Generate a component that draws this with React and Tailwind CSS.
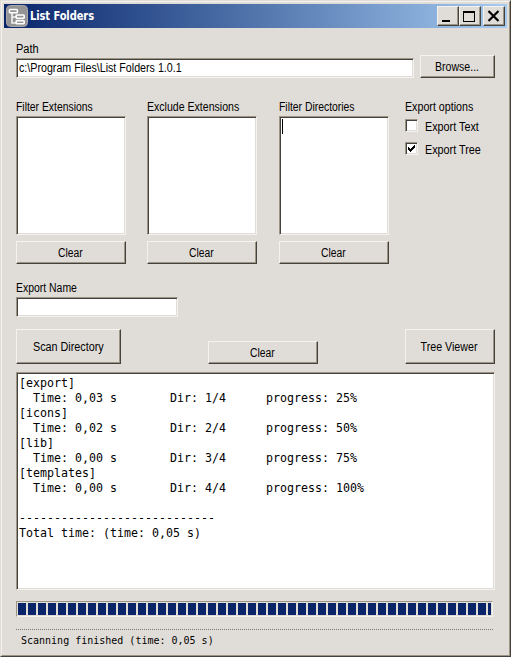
import React from 'react';

const raised =
  'border border-t-[#f4f2ee] border-l-[#f4f2ee] border-r-[#45423d] border-b-[#45423d] shadow-[inset_-1px_-1px_0_#9c9484] bg-[#e0ddd8]';
const sunken =
  'border border-t-[#9c9484] border-l-[#9c9484] border-r-[#f4f2ee] border-b-[#f4f2ee] shadow-[inset_1px_1px_0_#45423d,inset_-1px_-1px_0_#e0ddd8] bg-white';

function Button({ className, scale = 'scale-x-[.88]', children }) {
  return (
    <button className={`${raised} flex items-center justify-center whitespace-nowrap ${className}`}>
      {typeof children === 'string' ? <span className={`mr-px inline-block ${scale}`}>{children}</span> : children}
    </button>
  );
}

function Label({ className = '', scale = 'scale-x-[.87]', children }) {
  return (
    <div className={`h-[14px] leading-[14px] whitespace-nowrap ${className}`}>
      <span className={`inline-block origin-left ${scale}`}>{children}</span>
    </div>
  );
}

function FilterColumn({ title, scale, caret }) {
  return (
    <div className="w-[110px]">
      <Label scale={scale}>{title}</Label>
      <div className={`${sunken} mt-[2px] h-[119px] pt-[2px] pl-[2px]`}>
        {caret && <div className="h-[15px] w-px bg-black" />}
      </div>
      <Button className="mt-[6px] h-[23px] w-[110px]" scale="scale-x-[.86]">Clear</Button>
    </div>
  );
}

function Check({ label, checked }) {
  return (
    <div className="flex h-[13px] items-start">
      <div className={`${sunken} h-[13px] w-[13px] shrink-0`}>
        {checked && (
          <svg width="11" height="11" viewBox="0 0 11 11" shapeRendering="crispEdges">
            <path
              d="M2 4h1v3h-1zM3 5h1v3h-1zM4 6h1v3h-1zM5 5h1v3h-1zM6 4h1v3h-1zM7 3h1v3h-1zM8 2h1v3h-1z"
              fill="#000"
            />
          </svg>
        )}
      </div>
      <Label className="mt-[1px] ml-[7px] w-[60px]" scale="scale-x-[.9]">{label}</Label>
    </div>
  );
}

const entries = [
  { name: '[export]', time: '0,03 s', dir: '1/4', progress: '25%' },
  { name: '[icons]', time: '0,02 s', dir: '2/4', progress: '50%' },
  { name: '[lib]', time: '0,00 s', dir: '3/4', progress: '75%' },
  { name: '[templates]', time: '0,00 s', dir: '4/4', progress: '100%' },
];

function TreeIcon() {
  return (
    <svg className="ml-[2px] shrink-0" width="22" height="22" viewBox="0 0 22 22">
      <rect x="0.5" y="0.5" width="21" height="21" rx="4" fill="#949494" stroke="#a9a9a9" />
      <path d="M6 7.5v10.5H10M6 12H10" fill="none" stroke="#f2f2f2" strokeWidth="1.6" />
      <rect x="3.4" y="4.5" width="8" height="3.2" rx="0.8" fill="#949494" stroke="#fff" strokeWidth="1.6" />
      <rect x="10.2" y="10" width="8" height="3.2" rx="0.8" fill="#949494" stroke="#fff" strokeWidth="1.6" />
      <rect x="10.2" y="15.6" width="8" height="3.2" rx="0.8" fill="#949494" stroke="#fff" strokeWidth="1.6" />
    </svg>
  );
}

export default function App() {
  return (
    <div className="h-[657px] w-[511px] overflow-hidden border border-t-[#e0ddd8] border-l-[#e0ddd8] border-r-[#45423d] border-b-[#45423d] bg-[#e0ddd8] font-['Liberation_Sans',Arial,sans-serif] text-[12px] leading-[14px] text-black">
      <div className="h-[655px] w-[509px] border border-t-[#f4f2ee] border-l-[#f4f2ee] border-r-[#9c9484] border-b-[#9c9484] px-[2px] pt-[2px]">
        <div className="flex h-[24px] w-[503px] items-center bg-linear-to-r from-[#0a246a] to-[#a6caf0]">
          <TreeIcon />
          <div className="ml-[2px] origin-left scale-x-[.92] font-['DejaVu_Sans_Condensed','DejaVu_Sans',sans-serif] text-[12px] font-bold tracking-[-0.1px] whitespace-nowrap text-white">
            List Folders
          </div>
          <div className="mr-[2px] ml-auto flex">
            <Button className="h-[20px] w-[22px]">
              <svg width="20" height="18" shapeRendering="crispEdges">
                <path d="M4 13h8v2H4z" />
              </svg>
            </Button>
            <Button className="h-[20px] w-[22px]">
              <svg width="20" height="18" shapeRendering="crispEdges">
                <path d="M3 4h12v11H3zM4 6v8h10V6z" fillRule="evenodd" />
              </svg>
            </Button>
            <Button className="ml-[2px] h-[20px] w-[22px]">
              <svg width="20" height="18">
                <path d="M4.5 4l10 10M14.5 4l-10 10" stroke="#000" strokeWidth="2.2" />
              </svg>
            </Button>
          </div>
        </div>

        <div className="ml-[12px] w-[479px]">
          <Label className="mt-[14px]" scale="scale-x-[.92]">Path</Label>
          <div className="flex items-end justify-between">
            <div className={`${sunken} flex h-[20px] w-[398px] items-center pl-[2px] whitespace-nowrap`}>
              <span className="inline-block origin-left scale-x-[.89]">c:\Program Files\List Folders 1.0.1</span>
            </div>
            <Button className="-mt-[1px] h-[23px] w-[75px]">Browse...</Button>
          </div>

          <div className="mt-[22px] flex">
            <FilterColumn title="Filter Extensions" scale="scale-x-[.865]" />
            <div className="w-[21px]" />
            <FilterColumn title="Exclude Extensions" scale="scale-x-[.88]" />
            <div className="w-[22px]" />
            <FilterColumn title="Filter Directories" scale="scale-x-[.865]" caret />
            <div className="ml-[16px]">
              <Label className="w-[76px]" scale="scale-x-[.89]">Export options</Label>
              <div className="mt-[5px] flex flex-col gap-[10px]">
                <Check label="Export Text" />
                <Check label="Export Tree" checked />
              </div>
            </div>
          </div>

          <Label className="mt-[17px]">Export Name</Label>
          <div className={`${sunken} mt-[2px] h-[20px] w-[162px]`} />

          <div className="mt-[12px] flex items-end">
            <Button className="h-[35px] w-[105px]" scale="scale-x-[.9]">Scan Directory</Button>
            <Button className="ml-[87px] h-[23px] w-[110px]" scale="scale-x-[.86]">Clear</Button>
            <Button className="ml-auto h-[35px] w-[90px]" scale="scale-x-[.89]">Tree Viewer</Button>
          </div>

          <div
            className={`${sunken} mt-[8px] h-[218px] pt-[3px] pl-[2px] font-['DejaVu_Sans_Mono',monospace] text-[11.63px] leading-[15px] whitespace-pre`}
          >
            {entries.map((e) => (
              <div key={e.name}>
                <div>{e.name}</div>
                <div className="flex pl-[14px]">
                  <div className="w-[137px]">Time: {e.time}</div>
                  <div className="w-[96px]">Dir: {e.dir}</div>
                  <div>progress: {e.progress}</div>
                </div>
              </div>
            ))}
            <div className="mt-[15px]">----------------------------</div>
            <div>Total time: (time: 0,05 s)</div>
          </div>

          <div className="mt-[11px] flex h-[16px] w-[477px] gap-[2px] overflow-hidden border border-t-[#9c9484] border-l-[#9c9484] border-r-[#f4f2ee] border-b-[#f4f2ee] py-px pl-px">
            {Array.from({ length: 47 }, (_, i) => (
              <div key={i} className="h-[12px] w-[8px] shrink-0 bg-[#0a246a]" />
            ))}
            <div className="h-[12px] w-[3px] shrink-0 bg-[#0a246a]" />
          </div>

          <div className="mt-[12px] h-px w-[477px] bg-[repeating-linear-gradient(90deg,#777_0_1px,transparent_1px_2px)]" />
          <div className="mt-[3px] ml-[5px] font-['DejaVu_Sans_Mono',monospace] text-[10px] leading-[15px] whitespace-pre">
            Scanning finished (time: 0,05 s)
          </div>
        </div>
      </div>
    </div>
  );
}
